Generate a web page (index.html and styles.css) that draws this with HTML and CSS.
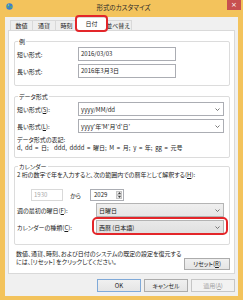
FILE: index.html
```html
<!DOCTYPE html>
<html lang="ja">
<head>
<meta charset="utf-8">
<title>形式のカスタマイズ</title>
<link rel="stylesheet" href="styles.css">
</head>
<body>
<div class="window">
  <div class="titlebar">
    <svg class="app-icon" width="7" height="7" viewBox="0 0 7 7">
      <circle cx="3.5" cy="3.5" r="3.2" fill="#3b7fcf"/>
      <path d="M1.2 2.4 L2.8 1.6 L3.4 2.8 L2.4 3.6 L2.6 5 L1.4 4.2 Z" fill="#5fb84a"/>
      <path d="M4.2 3.6 L5.8 3 L6 4.6 L4.8 5.6 Z" fill="#5fb84a"/>
      <circle cx="2.6" cy="2" r="0.8" fill="#a9d3f5" opacity="0.7"/>
    </svg>
    <div class="title">形式のカスタマイズ</div>
    <div class="close">×</div>
  </div>
  <div class="client">
    <div class="tabs">
      <div class="tab t1">数値</div>
      <div class="tab t2">通貨</div>
      <div class="tab t3">時刻</div>
      <div class="tab t4 active">日付</div>
      <div class="tab t5">並べ替え</div>
    </div>
    <div class="panel">
      <div class="group g-example">
        <div class="legend">例</div>
        <div class="row"><span class="label">短い形式:</span><div class="textbox">2016/03/03</div></div>
        <div class="row"><span class="label">長い形式:</span><div class="textbox">2016年3月3日</div></div>
      </div>
      <div class="group g-format">
        <div class="legend">データ形式</div>
        <div class="row"><span class="label">短い形式(<u>S</u>):</span><div class="combo"><span>yyyy/MM/dd</span><svg class="chev" width="5" height="3" viewBox="0 0 5 3"><polyline points="0.5,0.5 2.5,2.5 4.5,0.5" fill="none" stroke="#555" stroke-width="0.8"/></svg></div></div>
        <div class="row"><span class="label">長い形式(<u>L</u>):</span><div class="combo"><span>yyyy'年'M'月'd'日'</span><svg class="chev" width="5" height="3" viewBox="0 0 5 3"><polyline points="0.5,0.5 2.5,2.5 4.5,0.5" fill="none" stroke="#555" stroke-width="0.8"/></svg></div></div>
        <div class="note first">データ形式の表記:</div>
        <div class="note legend-line">d, dd = 日;&nbsp; ddd, dddd = 曜日; M = 月; y = 年; gg = 元号</div>
      </div>
      <div class="group g-calendar">
        <div class="legend">カレンダー</div>
        <div class="note cal-text">2 桁の数字で年を入力すると、次の範囲内での暦年として解釈する(<u>H</u>):</div>
        <div class="spin-row">
          <div class="year-disabled">1930</div>
          <span class="kara">から</span>
          <div class="spin">
            <div class="spin-text">2029</div>
            <div class="spin-btns">
              <div class="spin-btn"><svg width="3" height="2" viewBox="0 0 3 2"><polygon points="0,2 1.5,0 3,2" fill="#444"/></svg></div>
              <div class="spin-btn"><svg width="3" height="2" viewBox="0 0 3 2"><polygon points="0,0 1.5,2 3,0" fill="#444"/></svg></div>
            </div>
          </div>
        </div>
        <div class="row r-first"><span class="label">週の最初の曜日(<u>F</u>):</span><div class="combo grey"><span>日曜日</span><svg class="chev" width="5" height="3" viewBox="0 0 5 3"><polyline points="0.5,0.5 2.5,2.5 4.5,0.5" fill="none" stroke="#555" stroke-width="0.8"/></svg></div></div>
        <div class="row"><span class="label">カレンダーの種類(<u>C</u>):</span><div class="combo grey focused"><span>西暦 (日本語)</span><svg class="chev" width="5" height="3" viewBox="0 0 5 3"><polyline points="0.5,0.5 2.5,2.5 4.5,0.5" fill="none" stroke="#555" stroke-width="0.8"/></svg></div></div>
      </div>
      <div class="footer">
        <div class="footer-text">数値、通貨、時刻、および日付のシステムの既定の設定を復元する<br>には、[リセット] をクリックしてください。</div>
        <div class="btn reset">リセット(<u>R</u>)</div>
      </div>
    </div>
    <div class="buttons">
      <div class="btn default">OK</div>
      <div class="btn">キャンセル</div>
      <div class="btn disabled">適用(<u>A</u>)</div>
    </div>
  </div>
</div>
</body>
</html>
```
FILE: styles.css
```css
* { box-sizing: border-box; }
html, body { margin: 0; padding: 0; }
body {
  width: 243px;
  height: 300px;
  overflow: hidden;
  font-family: "Noto Sans CJK JP", "Noto Sans", sans-serif;
  font-feature-settings: "palt";
  font-size: 6px;
  line-height: 7px;
  color: #1b1b1b;
  background: #f3c35c;
}
u { text-decoration-thickness: 0.5px; text-underline-offset: 0.5px; }

.window {
  width: 243px;
  height: 300px;
  background: #f3c35c;
  display: flex;
  flex-direction: column;
}

.titlebar {
  flex: none;
  height: 17px;
  display: grid;
  grid-template-columns: 1fr auto 1fr;
  align-items: start;
  padding: 0 2px 0 6px;
}
.app-icon { margin-top: 3px; display: block; }
.title { margin-top: 3px; font-size: 6.5px; line-height: 8px; color: #2a2a2a; }
.close {
  justify-self: end;
  width: 14px;
  height: 10px;
  background: #c75050;
  color: #fff;
  font-family: "DejaVu Sans", sans-serif;
  font-size: 7px;
  line-height: 10px;
  text-align: center;
}

.client {
  flex: 1;
  margin: 0 5px 4px;
  background: #f0f0f0;
  display: flex;
  flex-direction: column;
}

.tabs {
  flex: none;
  height: 13px;
  display: flex;
  align-items: flex-end;
  padding-left: 5px;
}
.tab {
  height: 10px;
  border: 1px solid #d9d9d9;
  border-bottom: 0;
  margin-left: -1px;
  background: #eeeeee;
  line-height: 9px;
  text-align: center;
}
.tab.t1 { margin-left: 0; width: 23px; }
.tab.t2 { width: 24px; }
.tab.t3 { width: 23px; }
.tab.t4 { width: 31px; }
.tab.t5 { width: 28px; }
.tab.active {
  height: 14px;
  margin: 0 -2px -1px -2px;
  background: #fff;
  position: relative;
  z-index: 1;
  line-height: 11px;
}
.tab.active::after {
  content: "";
  position: absolute;
  inset: -3px -2px -1px -2px;
  border: 2px solid #e3262a;
  border-radius: 4px;
}

.panel {
  flex: none;
  height: 244px;
  margin: 0 3px;
  border: 1px solid #d9d9d9;
  background: #fff;
  padding: 0 4px 0 5px;
  display: flex;
  flex-direction: column;
}

.group {
  border: 1px solid #dcdcdc;
  border-radius: 2px;
  padding: 0 0 0 2px;
}
.g-example { margin-top: 10px; padding-bottom: 7px; }
.g-format { margin-top: 10px; padding-bottom: 5px; }
.g-calendar { margin-top: 8px; padding-bottom: 10px; }

.legend {
  width: fit-content;
  height: 7px;
  margin: -4px 0 0 1px;
  padding: 0 1px;
  background: #fff;
  line-height: 7px;
}

.row {
  display: flex;
  align-items: center;
  height: 14px;
}
.row + .row { margin-top: 3px; }
.legend + .row { margin-top: 2px; }
.label { flex: none; white-space: nowrap; }
.g-example .label, .g-format .label { width: 61px; }
.g-calendar .label { width: 79px; }

.textbox {
  width: 98px;
  height: 14px;
  border: 1px solid #abadb3;
  padding-left: 2px;
  line-height: 12px;
  white-space: nowrap;
}

.combo {
  height: 14px;
  border: 1px solid #abadb3;
  display: flex;
  align-items: center;
  justify-content: space-between;
  padding: 0 3px 0 2px;
  background: #fff;
  white-space: nowrap;
}
.g-format .combo { width: 146px; }
.g-calendar .combo { width: 128px; }
.combo.grey {
  background: linear-gradient(#efefef, #e6e6e6);
  border-color: #b4b4b4;
}
.combo.focused { position: relative; background: linear-gradient(#e9e9e9, #e0e0e0); }
.combo.focused::after {
  content: "";
  position: absolute;
  inset: -4px -5px -2px -5px;
  border: 2px solid #e3262a;
  border-radius: 5px;
}
.chev { display: block; flex: none; }

.note { white-space: nowrap; height: 8px; line-height: 8px; }
.note.first { margin-top: 3px; }
.note.legend-line { word-spacing: 1.3px; }
.note.cal-text { margin-top: 1px; }

.spin-row {
  display: flex;
  align-items: center;
  height: 12px;
  margin-top: 10px;
}
.year-disabled {
  margin-left: 14px;
  width: 32px;
  height: 12px;
  border: 1px solid #d9d9d9;
  color: #a8a8a8;
  padding-left: 2px;
  line-height: 10px;
}
.kara { margin-left: 7px; width: 20px; }
.spin {
  display: flex;
  width: 34px;
  height: 12px;
  border: 1px solid #abadb3;
}
.spin-text { flex: 1; padding-left: 3px; line-height: 10px; }
.spin-btns {
  width: 8px;
  display: flex;
  flex-direction: column;
  padding: 1px;
}
.spin-btn {
  flex: 1;
  display: flex;
  align-items: center;
  justify-content: center;
  background: #e8e8e8;
  border: 0.5px solid #c4c4c4;
}
.spin-btn svg { display: block; }
.row.r-first { margin-top: 2px; }

.footer {
  margin-top: 5px;
  padding-left: 2px;
  display: flex;
  align-items: flex-start;
}
.footer-text { flex: 1 1 auto; min-width: 0; white-space: nowrap; line-height: 8px; }
.btn {
  flex: none;
  height: 13px;
  width: 44px;
  border: 1px solid #acacac;
  background: linear-gradient(#f0f0f0, #e5e5e5);
  text-align: center;
  line-height: 11px;
  white-space: nowrap;
}
.btn.reset { width: 46px; height: 12px; line-height: 10px; margin-top: 8px; }
.buttons {
  flex: none;
  margin-top: 5px;
  display: flex;
  justify-content: flex-end;
  gap: 3px;
  padding-right: 3px;
}
.btn.default { border-color: #7fa9d8; }
.btn.disabled { color: #a3a3a3; border-color: #c6c6c6; background: #f2f2f2; }
```
